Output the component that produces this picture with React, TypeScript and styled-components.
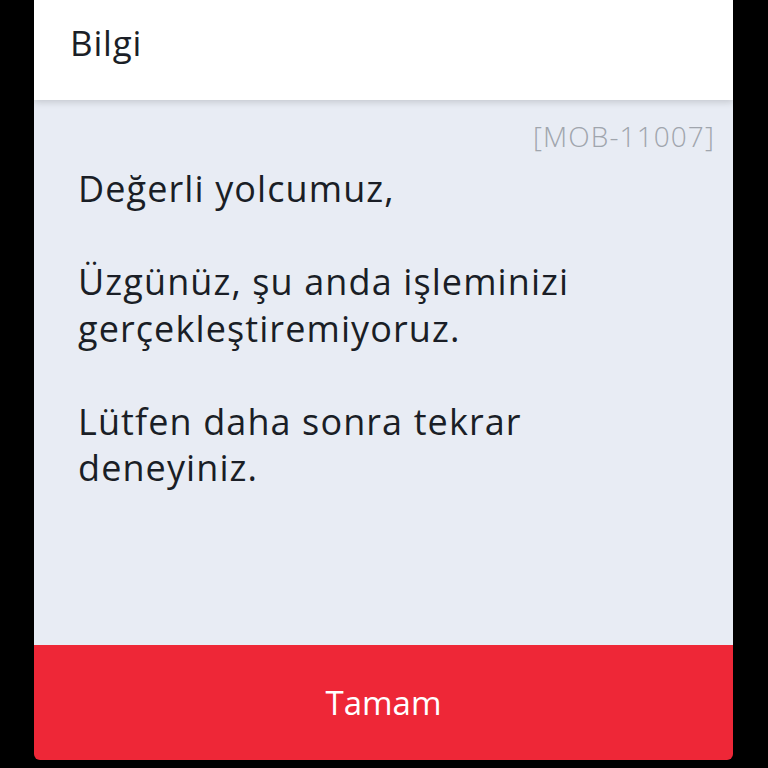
import React from "react";
import styled, { createGlobalStyle } from "styled-components";

const Global = createGlobalStyle`
  html, body { margin: 0; padding: 0; background: #000; }
  body { font-family: "Open Sans", Lato, sans-serif; }
`;

const Screen = styled.div`
  width: 768px;
  height: 768px;
  background: #000;
  display: flex;
  justify-content: center;
  box-sizing: border-box;
  padding: 0 35px 8px 34px;
`;

const Dialog = styled.div`
  flex: 1;
  display: flex;
  flex-direction: column;
  border-radius: 0 0 6px 6px;
  overflow: hidden;
`;

const Header = styled.div`
  height: 100px;
  background: #fff;
  display: flex;
  align-items: center;
  padding: 0 0 16px 36px;
  box-sizing: border-box;
  font-size: 35px;
  letter-spacing: 0.8px;
  color: #1b1f27;
  position: relative;
  z-index: 1;
  box-shadow: 0 2px 7px rgba(0, 0, 0, 0.16);
`;

const Body = styled.div`
  flex: 1;
  background: #e8ecf4;
  display: flex;
  flex-direction: column;
  padding: 18px 18px 0 44px;
`;

const Code = styled.div`
  align-self: flex-end;
  font-size: 28px;
  font-weight: 300;
  letter-spacing: 1.1px;
  color: #a0a5ad;
  line-height: 36px;
`;

const Message = styled.div`
  margin-top: 12px;
  font-size: 36px;
  line-height: 46.5px;
  letter-spacing: 1.1px;
  color: #1a1e26;
  white-space: pre-line;
`;

const Button = styled.button`
  height: 115px;
  border: none;
  background: #ee2737;
  color: #fff;
  font-family: "Open Sans", Lato, sans-serif;
  font-size: 33px;
  padding: 0;
  cursor: pointer;
`;

export default function App() {
  return (
    <>
      <Global />
      <Screen>
        <Dialog>
          <Header>Bilgi</Header>
          <Body>
            <Code>[MOB-11007]</Code>
            <Message>
              {"Değerli yolcumuz,\n\nÜzgünüz, şu anda işleminizi\ngerçekleştiremiyoruz.\n\nLütfen daha sonra tekrar\ndeneyiniz."}
            </Message>
          </Body>
          <Button>Tamam</Button>
        </Dialog>
      </Screen>
    </>
  );
}
